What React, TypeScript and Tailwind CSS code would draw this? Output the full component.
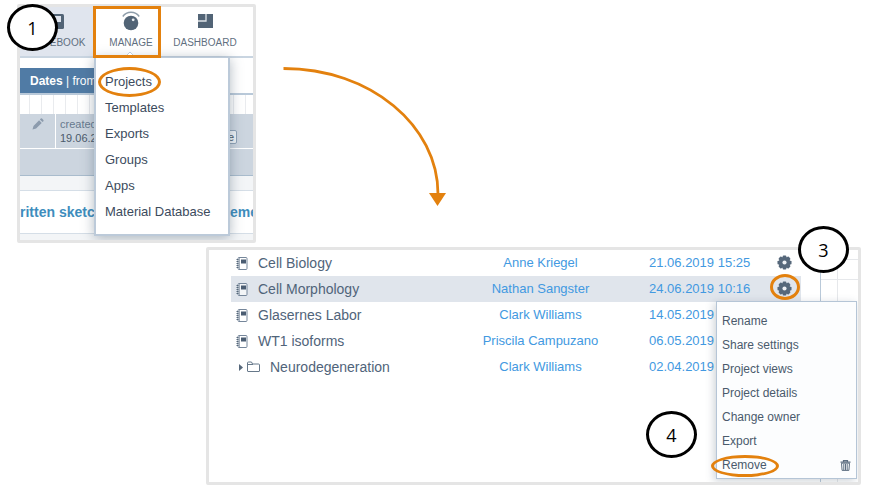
import type { ReactNode } from "react";
import clsx from "clsx";

type Project = {
  name: string;
  owner: string;
  date: string;
  folder?: boolean;
  selected?: boolean;
};

const manageItems = ["Projects", "Templates", "Exports", "Groups", "Apps", "Material Database"];

const projectActions = [
  "Rename",
  "Share settings",
  "Project views",
  "Project details",
  "Change owner",
  "Export",
  "Remove",
];

const projects: Project[] = [
  { name: "Cell Biology", owner: "Anne Kriegel", date: "21.06.2019 15:25" },
  { name: "Cell Morphology", owner: "Nathan Sangster", date: "24.06.2019 10:16", selected: true },
  { name: "Glasernes Labor", owner: "Clark Williams", date: "14.05.2019" },
  { name: "WT1 isoforms", owner: "Priscila Campuzano", date: "06.05.2019" },
  { name: "Neurodegeneration", owner: "Clark Williams", date: "02.04.2019", folder: true },
];

function NotebookIcon() {
  return (
    <svg aria-hidden="true" className="h-[13px] w-3" viewBox="0 0 12 13">
      <rect fill="#fff" fillOpacity=".6" height="12" rx="1" stroke="#75869a" width="9" x="2" y=".5" />
      <path d="M3.500 1v11" stroke="#a5b0bd" />
      <path d="M.5 2.500h2M.5 4.500h2M.5 6.500h2M.5 8.500h2M.5 10.500h2" stroke="#56687b" />
      <rect fill="#4b5d72" height="4" width="5" x="5" y="2.500" />
    </svg>
  );
}

function FolderIcon() {
  return (
    <svg aria-hidden="true" className="h-3 w-[13px]" fill="none" stroke="#66788a" viewBox="0 0 13 12">
      <path d="M.5 10V2a1 1 0 0 1 1-1h3l1 2h6a1 1 0 0 1 1 1v6a.5.5 0 0 1-.5.5H1a.5.5 0 0 1-.5-.5zM1 3.500h5" />
    </svg>
  );
}

function GearIcon() {
  return (
    <svg aria-hidden="true" className="h-[15px] w-[15px]" viewBox="0 0 16 16">
      <g fill="#56687b">
        {[0, 45, 90, 135].map((angle) => (
          <rect height="15" key={angle} rx="1" transform={`rotate(${angle} 8 8)`} width="4" x="6" y=".5" />
        ))}
        <circle cx="8" cy="8" r="6.200" />
      </g>
      <circle cx="8" cy="8" fill="#eef1f5" r="2.200" />
    </svg>
  );
}

function TrashIcon() {
  return (
    <svg aria-hidden="true" className="h-[11px] w-[11px]" fill="none" stroke="#5d6e81" viewBox="0 0 11 11">
      <path d="M.5 2.200h10M3.500 1.800V.6h4v1.200" strokeWidth="1.200" />
      <path d="M1.500 3.200h8l-.6 7.200H2.100zM3.800 4v6M5.500 4v6M7.200 4v6" />
    </svg>
  );
}

function ManageIcon() {
  return (
    <svg aria-hidden="true" className="h-5 w-[18px]" viewBox="0 0 18 20">
      <path d="M.8 5.500C4.600-.2 13.400-.2 17.200 5.500" fill="none" stroke="#8e9daa" strokeWidth="1.400" />
      <circle cx="9" cy="12" fill="#526476" r="7.300" />
      <circle cx="11.200" cy="8.800" fill="#e8edf2" r="1.400" />
    </svg>
  );
}

function DashboardIcon() {
  return (
    <svg aria-hidden="true" className="h-[14px] w-[15px]" viewBox="0 0 15 14">
      <path d="M0 0h15v14H0z" fill="#526476" />
      <path d="M8 0v7H0" fill="none" stroke="#dfe4e9" strokeWidth="1.300" />
    </svg>
  );
}

function TabNotebookIcon() {
  return (
    <svg aria-hidden="true" className="h-[15px] w-[14px]" viewBox="0 0 14 15">
      <rect fill="#526476" height="15" rx="1.500" width="14" />
      <rect fill="#e0e5ee" height="6" width="7" x="4" y="2" />
    </svg>
  );
}

function NavTab({ label, icon, active }: { label: string; icon: ReactNode; active?: boolean }) {
  return (
    <button
      className={clsx("flex w-[74px] flex-col items-center pt-[3px] text-[10px] text-[#5f6f80]", active && "bg-[#e0e5ee]")}
      type="button"
    >
      <span className="flex h-[22px] items-center">{icon}</span>
      <span className="mt-[3px] leading-4">{label}</span>
    </button>
  );
}

function StepBadge({ step, className }: { step: number; className: string }) {
  return (
    <span
      className={clsx(
        "absolute z-30 flex h-[47px] w-[51px] items-center justify-center rounded-[50%] border-[3px] border-black bg-white font-['Open_Sans',sans-serif] text-lg text-black",
        className,
      )}
    >
      {step}
    </span>
  );
}

function Highlight({ className }: { className: string }) {
  return <span aria-hidden="true" className={clsx("pointer-events-none absolute z-20 border-[3px] border-[#e3810e]", className)} />;
}

function ManagePanel() {
  return (
    <section className="relative w-[239px] shrink-0">
      <div className="relative overflow-hidden rounded-xs border-[3px] border-[#e5e5e5]">
        <nav className="flex h-[51px] border-b-2 border-[#c9d5e1]">
          <NavTab active icon={<TabNotebookIcon />} label="NOTEBOOK" />
          <NavTab icon={<ManageIcon />} label="MANAGE" />
          <NavTab icon={<DashboardIcon />} label="DASHBOARD" />
        </nav>
        <div className="flex h-[37px] items-end border-b-2 border-[#b9c9d9]">
          <button className="h-[25px] w-[90px] bg-[#507ba5] pl-[10px] text-left text-xs text-white" type="button">
            <span className="font-bold">Dates</span> | from
          </button>
        </div>
        <div className="h-[19px] bg-[repeating-linear-gradient(90deg,#fff_0,#fff_9px,#e9ebee_9px,#e9ebee_10px,#fff_10px,#fff_12px)]" />
        <div className="flex h-[35px] border-b border-white bg-[#ccd5df]">
          <div className="flex w-9 justify-center border-r border-white pt-1">
            <svg aria-hidden="true" className="h-3 w-3" fill="#8c9bad" viewBox="0 0 12 12">
              <path d="M.5 11.500l1-3.600 5.600-5.600 2.600 2.600-5.600 5.600zM7.900 1.500l.9-.9q.6-.5 1.200 0l1.400 1.400q.5.6 0 1.200l-.9.9z" />
            </svg>
          </div>
          <div className="pt-[3px] pl-1 text-[11px] leading-[14px]">
            <p className="text-[#66798e]">created</p>
            <p className="text-[#4b5a6b]">19.06.2</p>
          </div>
          <span className="mt-4 mr-4 ml-auto h-[14px] w-5 rounded-xs border border-[#8fa3b7] bg-[#eef2f6] pr-0.5 text-right text-[11px] leading-3 text-[#4b5a6b]">
            e
          </span>
        </div>
        <div className="h-[27px] border-b border-[#a9bccd] bg-[#ccd5df]" />
        <div className="h-[15px] border-b border-[#d5dee7] bg-[#f3f5f7]" />
        <div className="flex h-[43px] items-center border-b border-[#d5dee7] text-sm font-bold text-[#3e8dbd]">
          <span>ritten sketc</span>
          <span className="ml-auto w-[23px]">eme</span>
        </div>
        <div className="h-1.5 bg-[#f3f5f7]" />

        <div className="absolute top-[50px] left-[74px] z-10 h-[179px] w-[136px] border-2 border-t border-[#bccad9] bg-white pt-[11px] shadow-[0_2px_12px_rgba(60,80,100,0.4)]">
          <svg aria-hidden="true" className="absolute -top-[7px] left-7 h-[7px] w-3" viewBox="0 0 12 7">
            <path d="M0 7l6-6 6 6" fill="#fff" stroke="#bccad9" />
          </svg>
          {manageItems.map((item) => (
            <button className="block h-[26px] w-full pl-[9px] text-left text-[13px] text-[#3c4b5d]" key={item} type="button">
              {item}
            </button>
          ))}
        </div>
      </div>
      <Highlight className="top-0.5 left-[76px] h-[52px] w-[68px]" />
      <Highlight className="top-[63px] left-[81px] h-[30px] w-[63px] rounded-[50%]" />
      <StepBadge className="top-0 -left-[10px]" step={1} />
    </section>
  );
}

function ProjectRow({ project }: { project: Project }) {
  return (
    <tr className={clsx("h-[26px]", project.selected && "bg-[#e0e5ec]")}>
      <td className="p-0">
        <div className={clsx("flex items-center gap-[10px] text-sm text-[#50647a]", project.folder ? "pl-2" : "pl-[5px]")}>
          {project.folder ? (
            <span className="flex items-center gap-1">
              <svg aria-hidden="true" className="h-[7px] w-1" fill="#56687b" viewBox="0 0 4 7">
                <path d="M0 0l4 3.500-4 3.500z" />
              </svg>
              <FolderIcon />
            </span>
          ) : (
            <NotebookIcon />
          )}
          <span>{project.name}</span>
        </div>
      </td>
      <td className="p-0 text-center">
        <a href="#owner">{project.owner}</a>
      </td>
      <td className="p-0 pl-[35px] whitespace-nowrap">{project.date}</td>
      <td className="p-0">
        <button aria-label={`${project.name} settings`} className="flex w-full justify-center pb-0.5" type="button">
          <GearIcon />
        </button>
      </td>
    </tr>
  );
}

function ProjectsPanel() {
  return (
    <section className="relative mt-1 mr-2 ml-[206px]">
      <div className="relative flex overflow-hidden rounded-xs border-[3px] border-[#e5e5e5] pl-[22px]">
        <div className="flex-1 pb-[102px]">
          <table className="w-full table-fixed border-collapse text-[13px] text-[#4299e1]">
            <colgroup>
              <col />
              <col className="w-[147px]" />
              <col className="w-[154px]" />
              <col className="w-[33px]" />
            </colgroup>
            <tbody>
              {projects.map((project) => (
                <ProjectRow key={project.name} project={project} />
              ))}
            </tbody>
          </table>
        </div>
        <div className="ml-[19px] grid w-[38px] grid-cols-[17px_20px] grid-rows-[10px_20px_1fr] border-l border-[#b9c9d9]">
          <div className="border-r border-b border-[#e6e8eb]" />
          <div className="border-b border-[#e6e8eb]" />
          <div className="border-r border-b border-[#e6e8eb]" />
          <div className="border-b border-[#e6e8eb]" />
          <div className="border-r border-[#e6e8eb]" />
        </div>

        <div className="absolute top-[51px] right-px z-10 w-[141px] border border-[#b5c5d6] bg-[#fcfdfe] pt-[7px] pb-px shadow-[-2px_2px_8px_rgba(60,80,100,0.25)]">
          {projectActions.map((action) => (
            <button
              className="flex h-6 w-full items-center justify-between px-[5px] text-xs text-[#4a5a6c]"
              key={action}
              type="button"
            >
              {action}
              {action === "Remove" && <TrashIcon />}
            </button>
          ))}
        </div>
      </div>
      <Highlight className="top-[27px] right-[61px] h-[26px] w-[30px] rounded-[50%]" />
      <Highlight className="right-[82px] bottom-2 h-[22px] w-[68px] rounded-[50%]" />
      <StepBadge className="-top-[21px] right-3" step={3} />
      <StepBadge className="right-[164px] bottom-[27px]" step={4} />
    </section>
  );
}

export default function App() {
  return (
    <main className="min-h-screen bg-white pt-1 font-['Liberation_Sans',Arial,sans-serif]">
      <div className="flex items-start gap-[27px] pl-[17px]">
        <ManagePanel />
        <svg aria-hidden="true" className="mt-[60px] h-[146px] w-[166px] shrink-0" viewBox="0 0 166 146">
          <path d="M.5 4.500C88 4.500 155 62 155 130" fill="none" stroke="#e3810e" strokeWidth="2.800" />
          <path d="M146 129h17l-8.500 13z" fill="#e3810e" />
        </svg>
      </div>
      <ProjectsPanel />
    </main>
  );
}
